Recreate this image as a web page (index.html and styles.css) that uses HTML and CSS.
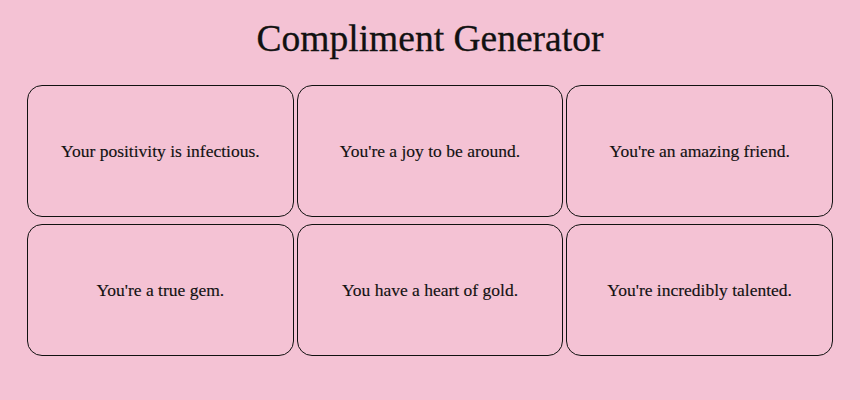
FILE: index.html
```html
<!DOCTYPE html>
<html>
<head>
<meta charset="utf-8">
<link rel="stylesheet" href="styles.css">
</head>
<body>
<h1 class="title">Compliment Generator</h1>
<div class="grid">
  <div class="card">Your positivity is infectious.</div>
  <div class="card">You're a joy to be around.</div>
  <div class="card">You're an amazing friend.</div>
  <div class="card">You're a true gem.</div>
  <div class="card">You have a heart of gold.</div>
  <div class="card">You're incredibly talented.</div>
</div>
</body>
</html>
```
FILE: styles.css
```css
html, body {
  margin: 0;
  padding: 0;
  background: #f4c2d4;
}
body {
  font-family: "Liberation Serif", "DejaVu Serif", serif;
  color: #111;
  padding: 0 27px;
}
.title {
  margin: 0;
  padding-top: 18px;
  height: 85px;
  box-sizing: border-box;
  text-align: center;
  font-weight: normal;
  font-size: 37.5px;
  line-height: 42px;
  -webkit-text-stroke: 0.3px #111;
}
.grid {
  display: grid;
  grid-template-columns: repeat(3, 1fr);
  column-gap: 3px;
  row-gap: 7px;
}
.card {
  height: 132px;
  box-sizing: border-box;
  border: 1px solid #111;
  border-radius: 15px;
  display: flex;
  align-items: center;
  justify-content: center;
  font-size: 17.5px;
  -webkit-text-stroke: 0.15px #111;
}
```
